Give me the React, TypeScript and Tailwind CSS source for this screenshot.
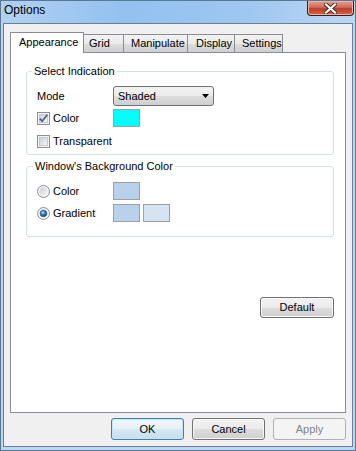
import React from "react";

const tabs = [
  { label: "Appearance", cls: "w-[74px] pl-[8px]", selected: true },
  { label: "Grid", cls: "w-[41px] pl-[5px] -ml-px" },
  { label: "Manipulate", cls: "w-[65px] pl-[7px] -ml-px" },
  { label: "Display", cls: "w-[48px] pl-[8px] -ml-px" },
  { label: "Settings", cls: "w-[49px] pl-[7px] -ml-px" },
];

const btnFace =
  "bg-[linear-gradient(#f2f2f2,#ebebeb_50%,#dddddd_50%,#cfcfcf)] border-[#707070]";

function CheckBox({ checked }: { checked?: boolean }) {
  return (
    <svg width="13" height="13" viewBox="0 0 13 13" className="shrink-0">
      <defs>
        <linearGradient id="cbFill" x1="0" y1="0" x2="1" y2="1">
          <stop offset="0" stopColor="#c9cdd3" />
          <stop offset="1" stopColor="#f8f8f8" />
        </linearGradient>
      </defs>
      <rect x="0.5" y="0.5" width="12" height="12" fill="#f4f4f4" stroke="#8e8f8f" />
      <rect x="2.5" y="2.5" width="8" height="8" fill="url(#cbFill)" stroke="#c4c8ce" />
      {checked && (
        <path d="M2.8 6.6 L5.2 9.2 L10.2 2.8" fill="none" stroke="#4a5f8f" strokeWidth="1.7" />
      )}
    </svg>
  );
}

function Radio({ checked }: { checked?: boolean }) {
  return (
    <svg width="13" height="13" viewBox="0 0 13 13" className="shrink-0">
      <defs>
        <linearGradient id="rbFill" x1="0" y1="0" x2="1" y2="1">
          <stop offset="0" stopColor="#c9cdd3" />
          <stop offset="1" stopColor="#f8f8f8" />
        </linearGradient>
        <radialGradient id="rbDot" cx="0.4" cy="0.35" r="0.7">
          <stop offset="0" stopColor="#b8e4fb" />
          <stop offset="0.5" stopColor="#2f7ab8" />
          <stop offset="1" stopColor="#143f6b" />
        </radialGradient>
      </defs>
      <circle cx="6.5" cy="6.5" r="6" fill="#f4f4f4" stroke="#8e8f8f" />
      <circle cx="6.5" cy="6.5" r="4.2" fill="url(#rbFill)" />
      {checked && <circle cx="6.5" cy="6.5" r="3.3" fill="url(#rbDot)" stroke="#1b4c7a" strokeWidth="0.6" />}
    </svg>
  );
}

function Swatch({ color }: { color: string }) {
  return <div className={`h-[18px] w-[27px] border border-[#a0a0a0] ${color}`} />;
}

function Button({ label, kind = "normal", className = "" }: { label: string; kind?: "normal" | "default" | "disabled"; className?: string }) {
  const look =
    kind === "default"
      ? "border-[#3c7fb1] bg-[linear-gradient(#f1f7fb,#e6f1f8_50%,#d6e8f3_50%,#c6dfef)] shadow-[inset_0_0_0_1px_#c6e6f8]"
      : kind === "disabled"
        ? "border-[#adb2b5] bg-[#f4f4f4] text-[#838383]"
        : `${btnFace} shadow-[inset_0_0_0_1px_#f8f8f8]`;
  return (
    <button className={`flex items-center justify-center rounded-[3px] border ${look} ${className}`}>
      {label}
    </button>
  );
}

export default function App() {
  return (
    <div className="flex h-[451px] w-[356px] flex-col border border-[#5a7798] bg-[#bdd6f0] font-['Liberation_Sans',Arial,sans-serif] text-[11px] text-black">
      {/* caption */}
      <div className="flex h-[22px] shrink-0 items-start justify-between bg-[linear-gradient(90deg,#b2d1f1,#93c1f0_35%,#9fc7f0_70%,#bcd7f2)] pl-[3px] pr-[1px]">
        <span className="pt-[2px] text-[12px] leading-[14px]">Options</span>
        <div className="flex h-[15px] w-[47px] items-center justify-center rounded-b-[4px] border border-t-0 border-[#3f1a14] bg-[linear-gradient(#e7a293,#d06a55_45%,#bf3b24_55%,#cf6a4e)] shadow-[inset_0_0_0_1px_#eab2a3]">
          <svg width="13" height="11" viewBox="0 0 13 11">
            <path d="M2 1.5 L11 9.5 M11 1.5 L2 9.5" stroke="#3b2a2a" strokeWidth="4" strokeLinecap="square" />
            <path d="M2 1.5 L11 9.5 M11 1.5 L2 9.5" stroke="#ffffff" strokeWidth="2.2" strokeLinecap="square" />
          </svg>
        </div>
      </div>

      <div className="flex flex-1 flex-col px-[2px] pb-[3px]">
        <div className="flex flex-1 flex-col border border-[#6a7f97] bg-[#f0f0f0] px-[6px] pt-[8px]">
          {/* tabs */}
          <div className="flex h-[20px] items-end">
            {tabs.map((t) =>
              t.selected ? (
                <div
                  key={t.label}
                  className={`relative z-10 -mb-px flex h-[21px] items-center border border-b-0 border-[#898c95] bg-white pb-[1px] ${t.cls}`}
                >
                  {t.label}
                </div>
              ) : (
                <div
                  key={t.label}
                  className={`flex h-[18px] items-center border border-b-0 border-[#898c95] bg-[linear-gradient(#f2f2f2,#ebebeb_50%,#dddddd_50%,#cfcfcf)] ${t.cls}`}
                >
                  {t.label}
                </div>
              )
            )}
          </div>

          {/* page */}
          <div className="flex h-[361px] w-[336px] flex-col border border-[#898c95] bg-white pl-[15px] pr-[11px] pt-[18px]">
            <div className="rounded-[3px] border border-[#d5dfe5] pb-[4px] pl-[10px]">
              <div className="-mt-[7px] -ml-[5px] w-fit bg-white px-[2px] leading-[13px]">Select Indication</div>
              <div className="mt-[8px] flex h-[20px] items-center">
                <span className="w-[76px]">Mode</span>
                <div className={`flex h-[20px] w-[101px] items-center justify-between rounded-[3px] border pl-[4px] pr-[4px] ${btnFace}`}>
                  <span>Shaded</span>
                  <svg width="7" height="4" viewBox="0 0 7 4">
                    <path d="M0 0 H7 L3.5 4 Z" fill="#000" />
                  </svg>
                </div>
              </div>
              <div className="mt-[3px] flex h-[18px] items-center">
                <div className="flex w-[76px] items-center gap-[3px]">
                  <CheckBox checked />
                  <span>Color</span>
                </div>
                <Swatch color="bg-[#00ffff]" />
              </div>
              <div className="mt-[5px] flex h-[18px] items-center gap-[3px]">
                <CheckBox />
                <span>Transparent</span>
              </div>
            </div>

            <div className="mt-[11px] rounded-[3px] border border-[#d5dfe5] pb-[14px] pl-[10px]">
              <div className="-mt-[7px] -ml-[4px] w-fit bg-white px-[2px] leading-[13px]">Window's Background Color</div>
              <div className="mt-[9px] flex h-[18px] items-center">
                <div className="flex w-[76px] items-center gap-[3px]">
                  <Radio />
                  <span>Color</span>
                </div>
                <Swatch color="bg-[#b9d1ea]" />
              </div>
              <div className="mt-[4px] flex h-[18px] items-center">
                <div className="flex w-[76px] items-center gap-[3px]">
                  <Radio checked />
                  <span>Gradient</span>
                </div>
                <div className="flex gap-[3px]">
                  <Swatch color="bg-[#b9d1ea]" />
                  <Swatch color="bg-[#d6e3f3]" />
                </div>
              </div>
            </div>

            <div className="mt-[60px] flex justify-end">
              <Button label="Default" className="h-[21px] w-[74px]" />
            </div>
          </div>

          {/* dialog buttons */}
          <div className="mt-[5px] flex justify-end gap-[8px]">
            <Button label="OK" kind="default" className="h-[22px] w-[73px]" />
            <Button label="Cancel" className="h-[22px] w-[73px]" />
            <Button label="Apply" kind="disabled" className="h-[22px] w-[73px]" />
          </div>
        </div>
      </div>
    </div>
  );
}
